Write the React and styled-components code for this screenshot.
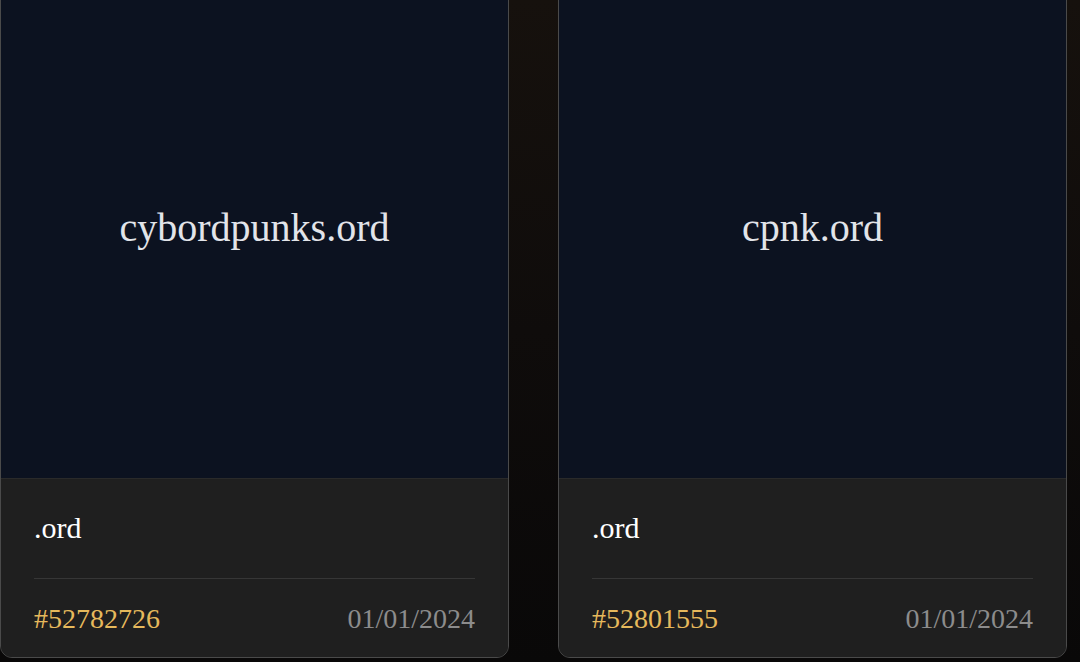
import React from "react";
import styled, { createGlobalStyle } from "styled-components";

const names = [
  { title: "cybordpunks.ord", ext: ".ord", number: "#52782726", date: "01/01/2024" },
  { title: "cpnk.ord", ext: ".ord", number: "#52801555", date: "01/01/2024" },
];

function App() {
  return (
    <>
      <GlobalStyle />
      <Page>
        <Grid>
          {names.map((item) => (
            <Card key={item.number}>
              <Preview>{item.title}</Preview>
              <Footer>
                <Name>{item.ext}</Name>
                <Divider />
                <Meta>
                  <Number>{item.number}</Number>
                  <Date>{item.date}</Date>
                </Meta>
              </Footer>
            </Card>
          ))}
        </Grid>
      </Page>
    </>
  );
}

export default App;

const GlobalStyle = createGlobalStyle`
  html, body {
    margin: 0;
    padding: 0;
    height: 100%;
    overflow: hidden;
    background: #0a0909;
  }
  * {
    box-sizing: border-box;
  }
`;

const Page = styled.div`
  height: 662px;
  overflow: hidden;
  background: linear-gradient(180deg, #16110d 0%, #0f0c0b 50%, #090808 100%);
  font-family: "Liberation Serif", "Times New Roman", serif;
`;

const Grid = styled.div`
  display: grid;
  grid-template-columns: repeat(2, 509px);
  gap: 49px;
  margin-top: -29px;
`;

const Card = styled.div`
  display: flex;
  flex-direction: column;
  border: 1px solid #4a4a4a;
  border-radius: 12px;
  overflow: hidden;
  background: #1f1f1f;
`;

const Preview = styled.div`
  aspect-ratio: 1 / 1;
  display: flex;
  align-items: center;
  justify-content: center;
  padding-top: 4px;
  background: #0c1220;
  border-bottom: 1px solid #2a2a2a;
  color: #e2e4e9;
  font-size: 40px;
`;

const Footer = styled.div`
  padding: 26px 33px 19px;
  background: #1f1f1f;
`;

const Name = styled.div`
  color: #ffffff;
  font-size: 30px;
  line-height: 45px;
`;

const Divider = styled.div`
  height: 1px;
  margin: 28px 0 20px;
  background: #363636;
`;

const Meta = styled.div`
  display: flex;
  justify-content: space-between;
  align-items: center;
  font-size: 28px;
  line-height: 39px;
`;

const Number = styled.span`
  color: #e6b95c;
`;

const Date = styled.span`
  color: #8c8c8c;
`;
